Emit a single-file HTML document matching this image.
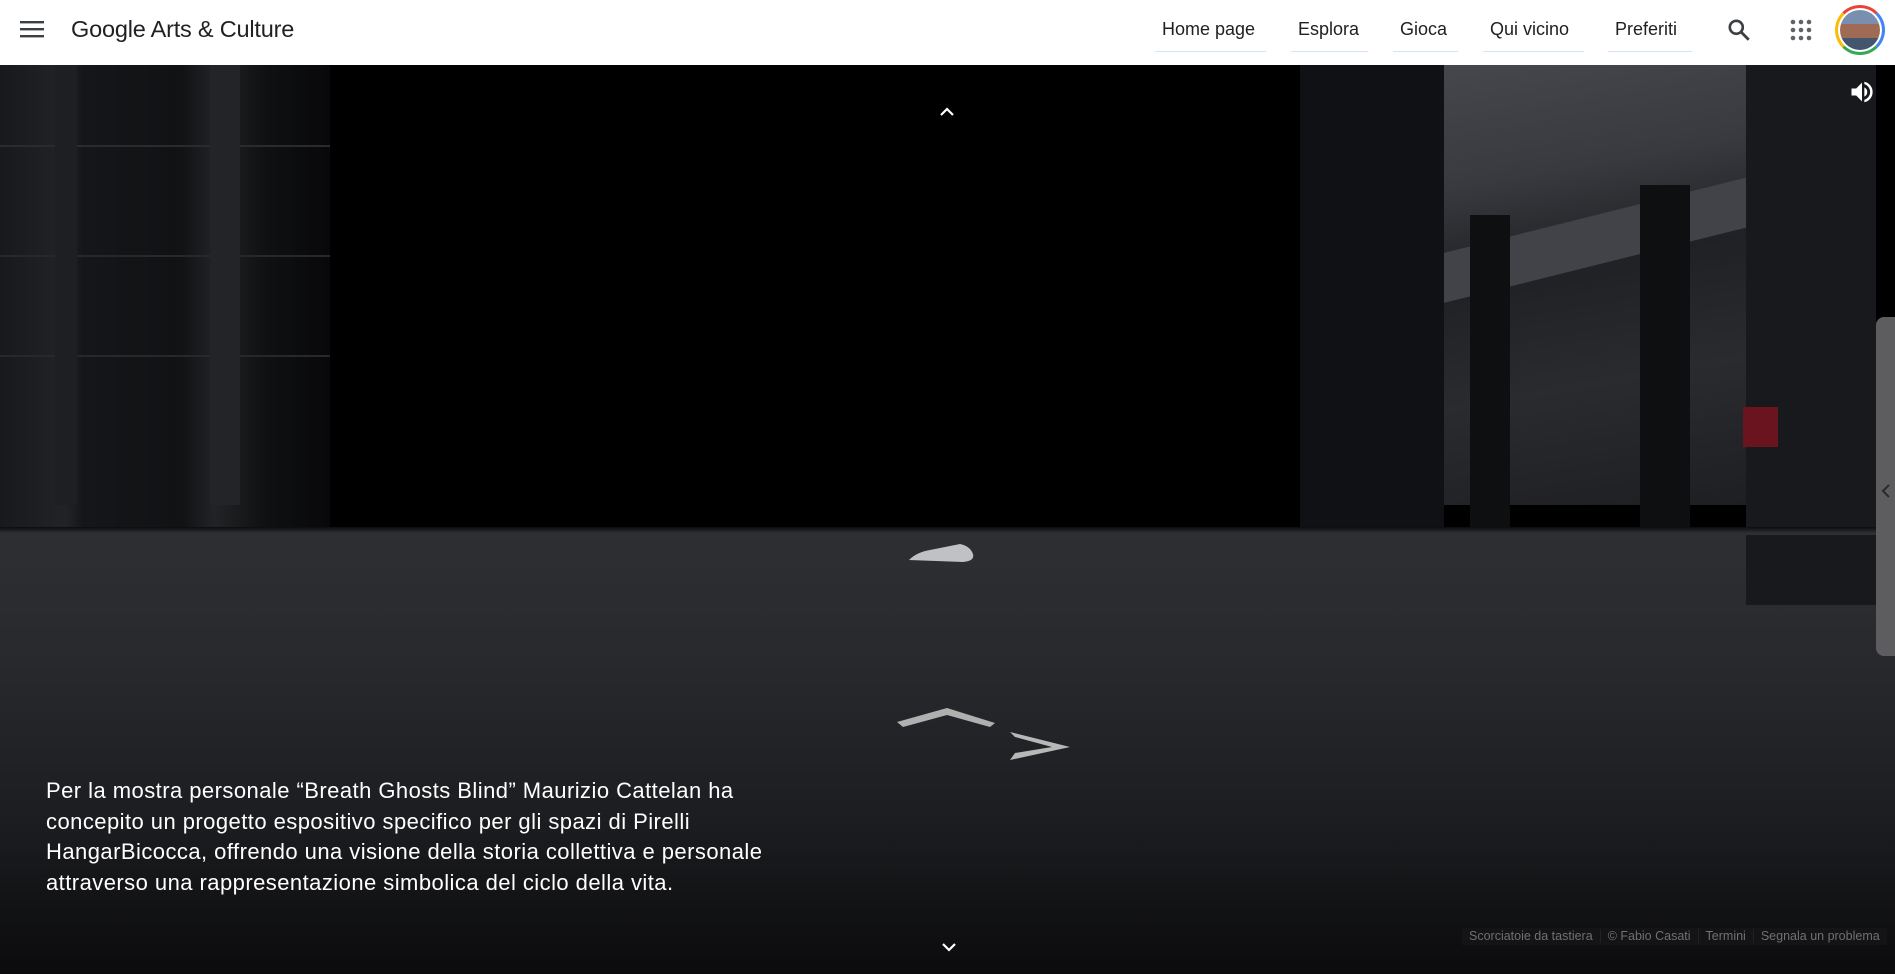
<!DOCTYPE html>
<html><head><meta charset="utf-8"><style>
*{margin:0;padding:0;box-sizing:border-box}
body{width:1895px;height:974px;overflow:hidden;background:#000;font-family:"Liberation Sans",Arial,sans-serif;position:relative}
.hdr{position:absolute;left:0;top:0;width:1895px;height:65px;background:#fff;z-index:5}
.nav{position:absolute;top:19px;font-size:18px;color:#202124}
.ul{position:absolute;top:51px;height:1px;background:#d2e3fc}
.scene{position:absolute;left:0;top:65px;width:1895px;height:909px;overflow:hidden;background:#000}
.abs{position:absolute}
</style></head><body>
<div class="hdr">
 <svg class="abs" style="left:20px;top:20px" width="24" height="18" viewBox="0 0 24 18"><rect y="1" width="24" height="2.4" fill="#3c4043"/><rect y="8" width="24" height="2.4" fill="#3c4043"/><rect y="15" width="24" height="2.4" fill="#3c4043"/></svg>
 <div class="abs" style="left:71px;top:16px;font-size:23.5px;color:#202124;letter-spacing:-0.2px">Google Arts &amp; Culture</div>
 <div class="nav" style="left:1162px">Home page</div><div class="ul" style="left:1155px;width:111px"></div>
 <div class="nav" style="left:1298px">Esplora</div><div class="ul" style="left:1291px;width:77px"></div>
 <div class="nav" style="left:1400px">Gioca</div><div class="ul" style="left:1393px;width:65px"></div>
 <div class="nav" style="left:1490px">Qui vicino</div><div class="ul" style="left:1483px;width:101px"></div>
 <div class="nav" style="left:1615px">Preferiti</div><div class="ul" style="left:1608px;width:84px"></div>
 <svg class="abs" style="left:1726px;top:17px" width="26" height="26" viewBox="0 0 24 24"><circle cx="9.5" cy="9.5" r="6" fill="none" stroke="#3c4043" stroke-width="2.4"/><path d="M14 14l7 7" stroke="#3c4043" stroke-width="2.6"/></svg>
 <svg class="abs" style="left:1790px;top:19px" width="22" height="22" viewBox="0 0 22 22" fill="#5f6368"><circle cx="3" cy="3" r="2.3"/><circle cx="11" cy="3" r="2.3"/><circle cx="19" cy="3" r="2.3"/><circle cx="3" cy="11" r="2.3"/><circle cx="11" cy="11" r="2.3"/><circle cx="19" cy="11" r="2.3"/><circle cx="3" cy="19" r="2.3"/><circle cx="11" cy="19" r="2.3"/><circle cx="19" cy="19" r="2.3"/></svg>
 <div class="abs" style="left:1835px;top:5px;width:50px;height:50px;border-radius:50%;border:3px solid;border-color:#ea4335 #4285f4 #34a853 #fbbc05;padding:2px"><div style="width:100%;height:100%;border-radius:50%;background:linear-gradient(#7a8fb0 0 35%,#a06b55 35% 70%,#44556e 70%)"></div></div>
</div>
<div class="scene">
 <div class="abs" style="left:0;top:0;width:330px;height:470px;background:linear-gradient(90deg,#18191c 0,#222327 20%,#151619 25%,#111214 55%,#222326 65%,#101113 80%,#08080a 100%)"></div>
 <div class="abs" style="left:0;top:80px;width:330px;height:2px;background:#2a2b2e"></div>
 <div class="abs" style="left:0;top:190px;width:330px;height:2px;background:#27282b"></div>
 <div class="abs" style="left:0;top:290px;width:330px;height:2px;background:#27282b"></div>
 <div class="abs" style="left:55px;top:0;width:22px;height:440px;background:#1e1f22"></div>
 <div class="abs" style="left:210px;top:0;width:30px;height:440px;background:#232427"></div>
 <div class="abs" style="left:330px;top:0;width:1015px;height:470px;background:#000"></div>
 <div class="abs" style="left:1300px;top:0;width:144px;height:475px;background:#101114"></div>
 <div class="abs" style="left:1444px;top:0;width:304px;height:440px;background:linear-gradient(170deg,#45474d 0,#383a3f 25%,#202124 45%,#2a2b2f 70%,#1e1f22 100%)"></div>
 <div class="abs" style="left:1444px;top:150px;width:304px;height:50px;background:#414349;transform:skewY(-14deg)"></div>
 <div class="abs" style="left:1470px;top:150px;width:40px;height:320px;background:#0e0f11"></div>
 <div class="abs" style="left:1640px;top:120px;width:50px;height:360px;background:#0e0f11"></div>
 <div class="abs" style="left:1746px;top:0;width:130px;height:540px;background:#18191c"></div>
 <div class="abs" style="left:1743px;top:342px;width:35px;height:40px;background:#6a1420"></div>
 <div class="abs" style="left:0;top:468px;width:1895px;height:441px;background:linear-gradient(#2e2f33 0,#28292d 30%,#1c1d20 65%,#0b0b0d 100%)"></div>
 <div class="abs" style="left:1746px;top:470px;width:130px;height:70px;background:#18191c"></div>
 <div class="abs" style="left:0;top:462px;width:1895px;height:6px;background:linear-gradient(#0c0c0e,#2e2f33)"></div>
 <svg class="abs" style="left:905px;top:470px" width="80" height="30"><path d="M4 25 Q12 17 25 15 L55 9 Q65 11 68 19 Q70 26 58 27 Z" fill="#c0c1c5"/></svg>
 <svg class="abs" style="left:0;top:0" width="1895" height="909"><polygon points="897,657 947,643 995,658 990,662 947,650 903,662" fill="#b0b0b0"/><polygon points="1010,667 1070,682 1010,695 1015,688 1052,682 1015,672" fill="#b8b8b8"/></svg>
 <div class="abs" style="left:46px;top:711px;width:770px;font-size:22px;letter-spacing:0.45px;line-height:30.5px;color:#fff">Per la mostra personale “Breath Ghosts Blind” Maurizio Cattelan ha concepito un progetto espositivo specifico per gli spazi di Pirelli HangarBicocca, offrendo una visione della storia collettiva e personale attraverso una rappresentazione simbolica del ciclo della vita.</div>
 <svg class="abs" style="left:939px;top:41px" width="16" height="12"><path d="M2 9l6-6 6 6" fill="none" stroke="#fff" stroke-width="2.2"/></svg>
 <svg class="abs" style="left:941px;top:876px" width="16" height="12"><path d="M2 3l6 6 6-6" fill="none" stroke="#fff" stroke-width="2.2"/></svg>
 <svg class="abs" style="left:1848px;top:13px" width="28" height="28" viewBox="0 0 24 24"><path d="M3 9v6h4l5 5V4L7 9H3zm13.5 3A4.5 4.5 0 0014 8v8a4.5 4.5 0 002.5-4zM14 3.2v2.1a7 7 0 010 13.4v2.1a9 9 0 000-17.6z" fill="#fff"/></svg>
 <div class="abs" style="left:1876px;top:252px;width:30px;height:339px;border-radius:8px;background:#5d5d60"></div>
 <svg class="abs" style="left:1880px;top:418px" width="12" height="16"><path d="M9 2L3 8l6 6" fill="none" stroke="#2a2a2a" stroke-width="2"/></svg>
 <div class="abs" style="left:1462px;top:863px;height:17px;background:#141416;font-size:12.5px;color:#707074;line-height:17px;white-space:nowrap"><span style="padding:0 7px">Scorciatoie da tastiera</span><span style="padding:0 7px;border-left:1px solid #222">© Fabio Casati</span><span style="padding:0 7px;border-left:1px solid #222">Termini</span><span style="padding:0 7px;border-left:1px solid #222">Segnala un problema</span></div>
</div>
</body></html>
